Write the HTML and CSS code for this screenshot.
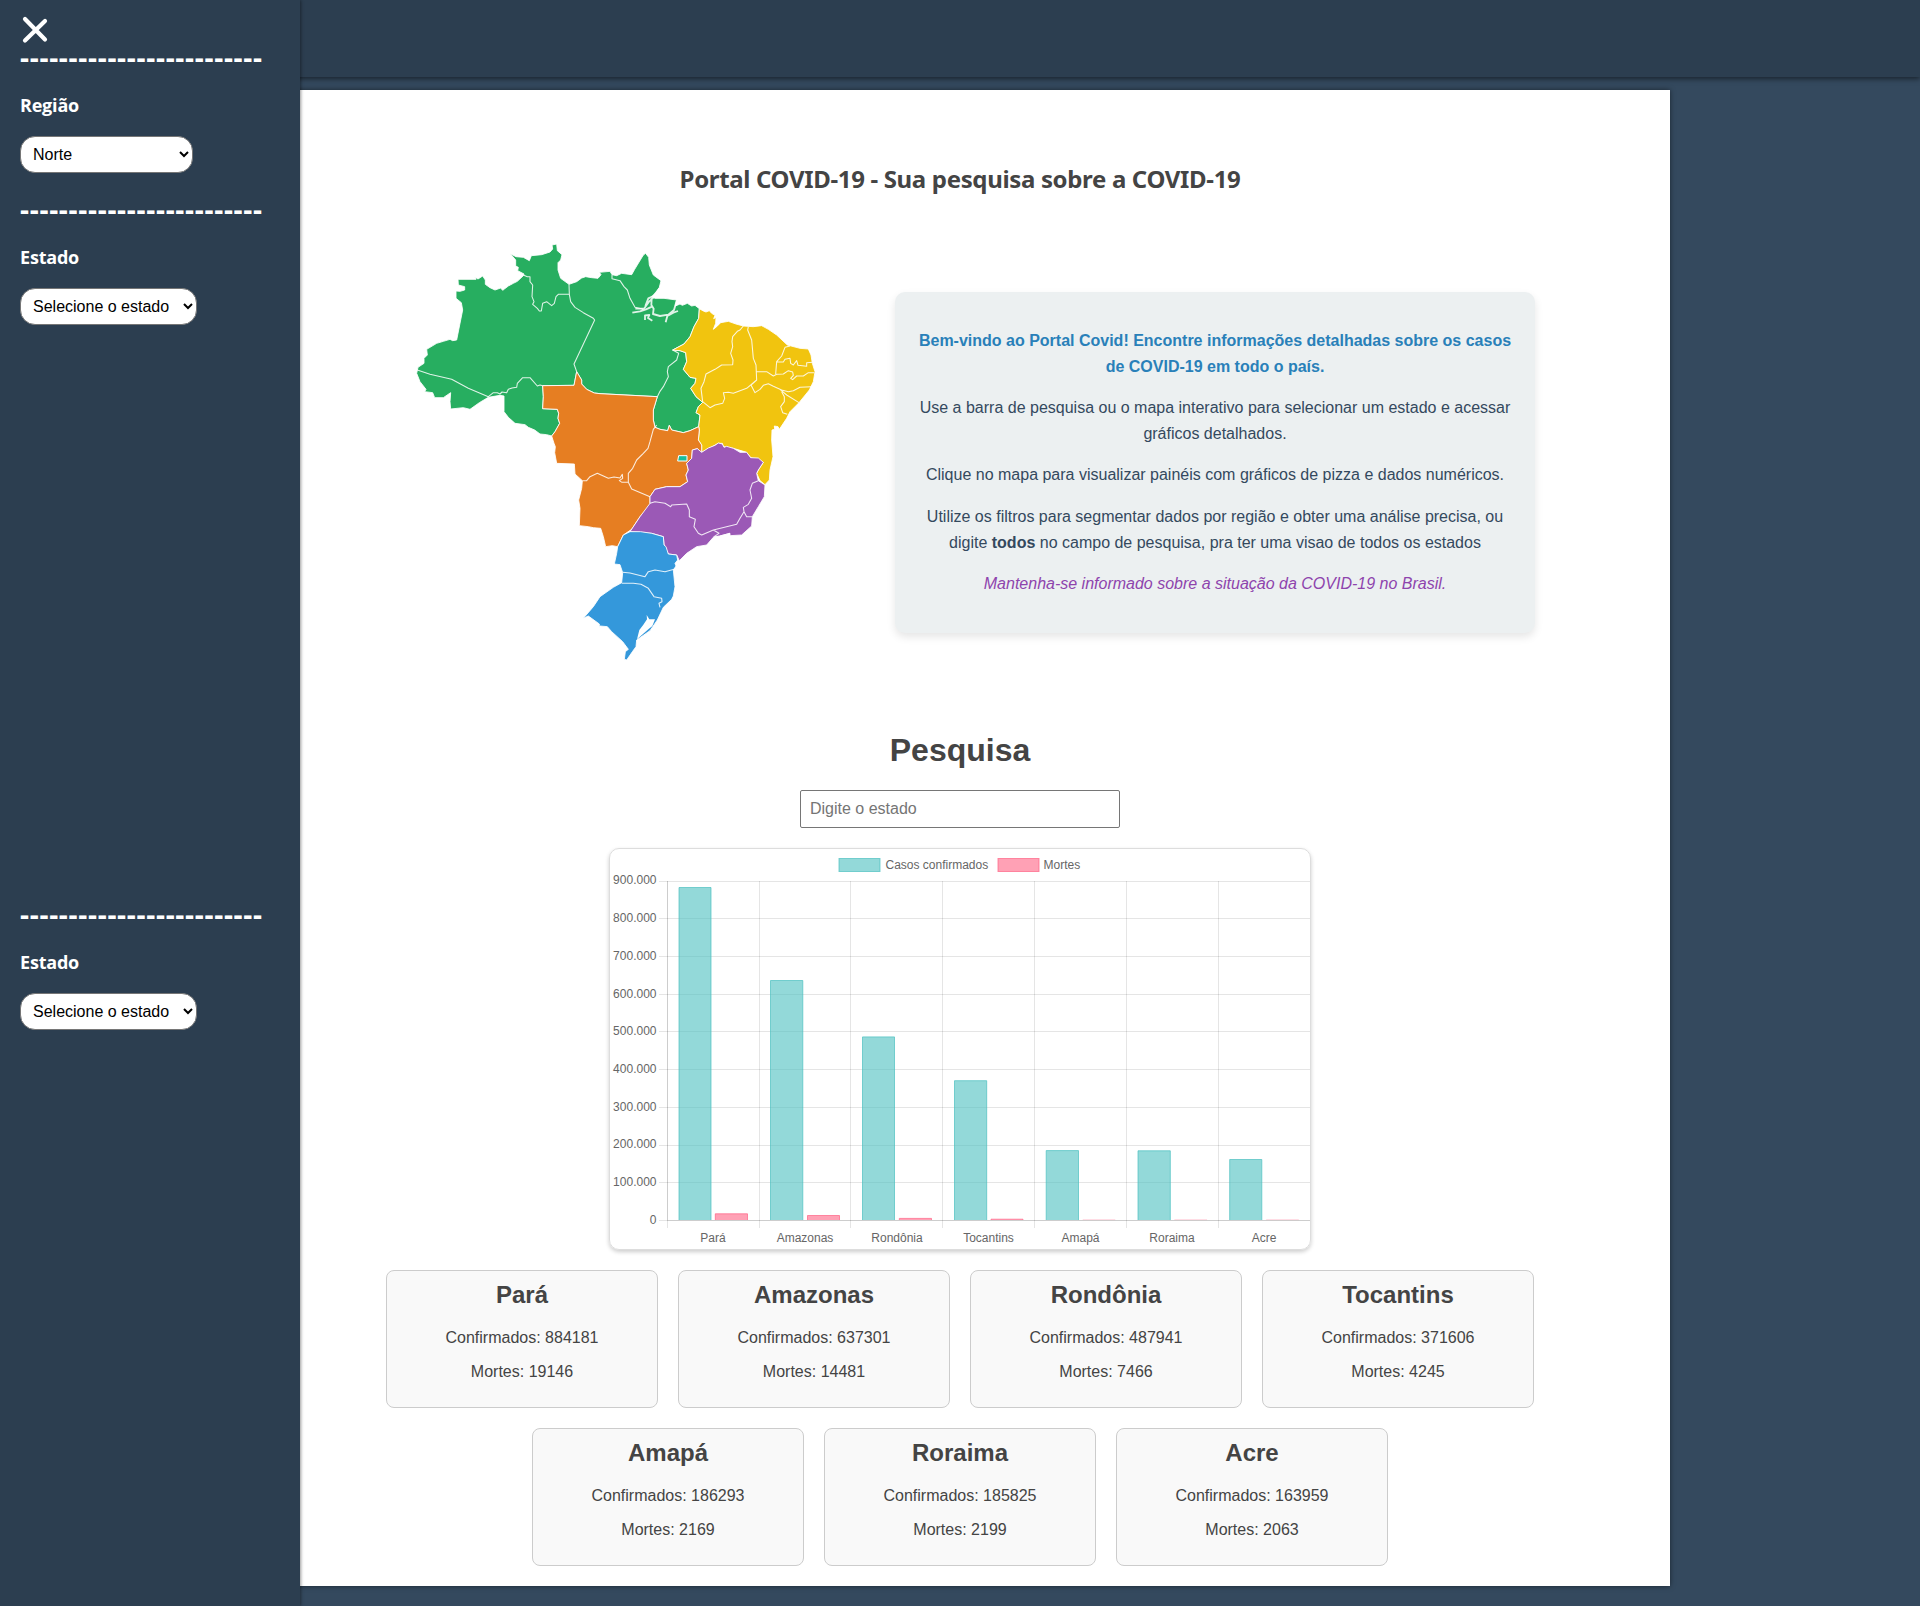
FILE: index.html
```html
<!DOCTYPE html>
<html lang="pt-BR">
<head>
<meta charset="utf-8">
<title>Portal COVID-19</title>
<link rel="stylesheet" href="styles.css">
</head>
<body>
<header class="topbar"></header>
<aside class="sidebar">
  <button class="close" aria-label="Fechar"><svg width="26" height="28" viewBox="0 0 26 28"><path d="M3 3L23 23.5M3 24.5L23 5" stroke="#fff" stroke-width="4.2" stroke-linecap="round"/></svg></button>
  <section class="filter">
    <div class="dashes">-------------------------</div>
    <h3>Região</h3>
    <select class="region"><option>Norte</option></select>
  </section>
  <section class="filter">
    <div class="dashes">-------------------------</div>
    <h3>Estado</h3>
    <select class="state"><option>Selecione o estado</option></select>
  </section>
  <section class="filter filter-last">
    <div class="dashes">-------------------------</div>
    <h3>Estado</h3>
    <select class="state"><option>Selecione o estado</option></select>
  </section>
</aside>
<main class="page">
  <h1>Portal COVID-19 - Sua pesquisa sobre a COVID-19</h1>
  <div class="intro">
    <svg class="map" viewBox="0 0 1260 1320" width="420" height="440">
      <g class="norte">
        <path class="land" d="M50 430L54 412L72 400L72 385L82 375L80 358L110 340L130 334L150 328L158 332L170 330L179 285L188 240L184 218L168 205L168 183L180 184L194 180L194 170L175 165L174 148L228 148L224 141L234 147L248 138L256 150L256 163L270 173L285 180L302 174L308 181L325 168L340 160L352 154L370 137L372 132L353 122L355 112L347 108L347 90L331 71L348 80L370 82L388 92L394 77L425 74L450 66L458 57L456 45L470 42L472 62L486 74L482 90L474 98L474 120L482 145L507 163L530 155L545 144L557 140L575 143L594 145L603 134L598 127L630 124L636 134L650 137L665 130L695 134L704 118L730 75L737 70L746 82L748 105L760 135L783 152L778 172L768 188L755 200L765 205L792 205L830 210L826 228L840 222L847 226L862 220L875 228L885 226L898 236L896 265L882 290L870 320L852 342L818 360L840 362L857 368L860 395L850 418L870 442L888 445L885 460L872 475L888 500L908 517L895 530L888 548L900 555L896 590L870 602L850 608L815 600L808 586L803 602L780 598L765 592L760 570L760 540L772 500L600 491L583 489L560 478L545 462L545 450L530 425L522 466L428 467L430 500L428 536L472 538L476 550L474 565L479 580L465 605L455 618L440 614L420 612L404 600L385 592L375 584L345 580L325 562L312 545L312 498L300 496L265 502L238 518L210 538L190 533L152 537L150 515L152 488L130 503L104 503L98 488L74 485L78 478L60 455Z"/>
        <path class="border" d="M52 420L90 433L155 448L205 475L265 500L280 488L292 488L300 492L306 486L320 488L325 478L336 474L350 472L352 460L368 443L390 443L412 468L420 465L428 467M370 135L382 140L390 140L390 155L398 165L396 200L402 215L398 223L412 235L418 243L424 243L428 220L440 215L455 227L463 220L468 200L475 193L508 193M507 163L508 193L512 215L525 232L550 248L580 265L584 270L522 402L530 425M636 134L636 146L660 152L672 170L682 180L690 205L705 232L730 238M818 360L836 370L830 390L805 410L802 425L805 440L790 470L780 484L772 500"/>
        <path class="river" d="M697 248L720 244L738 238L756 230M706 236L732 236L748 214L780 184M736 228L745 205L760 198L778 176M760 198L792 196M770 190L788 192M755 205L754 225L761 236L759 252L780 258L805 254L822 240L830 212M735 270L735 256L748 255L744 264L757 272M797 277L802 258L820 248L834 243"/>
      </g>
      <g class="nordeste">
        <path class="land" d="M898 236L910 243L918 246L928 242L935 250L945 256L941 266L948 262L947 280L940 298L950 290L962 278L985 274L1008 282L1030 288L1060 290L1085 287L1105 298L1130 315L1162 345L1200 355L1225 357L1233 375L1237 400L1245 425L1240 455L1228 480L1197 518L1170 545L1160 565L1138 598L1134 590L1123 588L1124 598L1116 600L1115 630L1119 680L1110 720L1108 750L1095 764L1080 752L1070 730L1075 720L1090 697L1060 686L1052 683L1040 667L1000 655L970 650L967 640L955 640L905 667L905 645L895 630L898 600L896 590L900 555L888 548L895 530L908 517L888 500L872 475L885 460L888 445L870 442L850 418L860 395L857 368L840 362L818 360L852 342L870 320L882 290L896 265Z"/>
        <path class="border" d="M1030 288L1020 300L1012 304L998 320L996 335L998 350L992 370L999 390L998 404L965 405L945 418L918 432L912 455L903 475L908 515L930 533L945 525L968 520L974 505L970 488L985 487L1000 490L1040 475L1070 450L1068 405L1060 385L1055 330L1043 300L1045 290M1070 425L1100 425L1120 438L1130 433M1170 348L1155 352L1145 378L1130 395L1127 432M1130 395L1150 396L1155 388L1170 385L1172 400L1180 405L1190 392L1194 406L1220 409L1220 398L1238 397M1130 433L1150 432L1165 422L1178 426L1180 436L1172 445L1178 449L1190 438L1210 438L1225 428L1242 428M1053 465L1065 488L1080 478L1090 466L1105 461L1120 469L1145 480L1165 485L1180 482L1200 472L1235 470M1140 478L1160 495L1197 518M1145 485L1153 500L1153 515L1142 530L1148 548L1162 553M1070 450L1053 465"/>
      </g>
      <g class="centro">
        <path class="land" d="M530 425L545 450L545 462L560 478L583 489L600 491L772 500L760 540L760 570L765 592L780 598L803 602L808 586L815 600L850 608L870 602L896 590L898 600L895 630L905 645L905 667L892 656L877 660L875 685L860 700L865 720L858 735L863 755L840 770L800 770L765 778L750 800L750 828L720 860L695 898L670 915L653 950L637 947L617 950L610 920L602 895L580 893L565 890L538 887L540 835L536 810L545 775L547 752L525 732L523 702L470 700L464 668L466 650L462 640L455 618L465 605L479 580L474 565L476 550L472 538L428 536L430 500L428 467L522 466Z"/>
        <path class="border" d="M770 585L760 598L750 635L744 655L730 670L710 690L698 715L685 730L685 757M547 752L560 752L570 740L592 730L625 745L642 741L660 744L667 733L668 745L658 752L666 757L685 757L695 777L750 800"/>
        <path class="federal" d="M836 677H861V693H833Z"/>
      </g>
      <g class="sudeste">
        <path class="land" d="M690 905L720 860L750 820L750 800L765 778L800 770L840 770L863 755L858 735L865 720L860 700L875 685L877 660L892 656L905 667L925 654L945 646L955 639L967 642L972 652L980 649L1000 655L1020 667L1040 667L1052 683L1075 684L1090 697L1075 720L1070 730L1075 752L1095 765L1093 800L1075 830L1057 860L1055 888L1025 915L990 917L990 910L960 918L940 922L920 945L890 950L860 970L838 992L830 975L805 972L792 945L790 920L755 910Z"/>
        <path class="border" d="M750 820L765 815L795 820L812 830L815 825L860 822L868 840L868 860L886 868L882 890L895 910L905 915L940 900L1010 883L1020 865L1032 845L1030 832L1045 823L1055 805L1050 780L1057 760L1075 752M1032 845L1040 860L1057 860M940 900L957 910L942 920L960 918M960 918L990 910"/>
      </g>
      <g class="sul">
        <path class="land" d="M670 915L690 905L722 905L755 910L790 920L792 945L798 950L805 972L830 975L833 990L825 1000L828 1008L820 1020L823 1050L825 1070L820 1098L815 1108L790 1132L772 1170L750 1202L710 1230L708 1250L698 1264L680 1290L673 1288L676 1265L685 1258L668 1235L635 1205L622 1190L600 1188L598 1193L598 1182L565 1158L550 1165L580 1130L600 1100L640 1072L665 1058L668 1028L660 1004L643 1002L650 970L653 950Z"/>
        <path class="border" d="M668 1027L690 1029L735 1040L745 1025L765 1020L795 1025L825 1017M665 1060L700 1060L723 1063L745 1075L762 1100L785 1105L786 1115L777 1120L780 1132"/>
        <path class="lagoon" d="M740 1155L741 1168L730 1184L718 1200L711 1228L745 1198L757 1188L765 1168L748 1168Z"/>
      </g>
    </svg>
    <div class="welcome">
      <p class="lead">Bem-vindo ao Portal Covid! Encontre informações detalhadas sobre os casos de COVID-19 em todo o país.</p>
      <p>Use a barra de pesquisa ou o mapa interativo para selecionar um estado e acessar gráficos detalhados.</p>
      <p>Clique no mapa para visualizar painéis com gráficos de pizza e dados numéricos.</p>
      <p>Utilize os filtros para segmentar dados por região e obter uma análise precisa, ou digite <strong>todos</strong> no campo de pesquisa, pra ter uma visao de todos os estados</p>
      <p class="closing">Mantenha-se informado sobre a situação da COVID-19 no Brasil.</p>
    </div>
  </div>
  <h2 class="search-title">Pesquisa</h2>
  <input class="search" type="text" placeholder="Digite o estado">
  <div class="chart">
    <svg width="700" height="400" viewBox="0 0 700 400">
      <path class="grid" d="M49 32.5H700M49 69.5H700M49 107.5H700M49 145.5H700M49 182.5H700M49 220.5H700M49 258.5H700M49 296.5H700M49 333.5H700M49 371.5H700M57.5 32V379M149.5 32V379M240.5 32V379M332.5 32V379M424.5 32V379M516.5 32V379M608.5 32V379"/>
      <path class="grid" d="M57.5 32V371M57 371.5H700"/>
      <g class="cases">
        <rect x="229" y="9.5" width="41" height="13"/>
        <path d="M69 371V38.5H101V371M160.5 371V131.5H192.8V371M252.5 371V187.9H284.5V371M344.5 371V231.7H376.7V371M436.2 371V301.6H468.5V371M528 371V301.8H560.3V371M619.7 371V310.5H651.8V371"/>
      </g>
      <g class="deaths">
        <rect x="388" y="9.5" width="41" height="13"/>
        <path d="M105.3 371V364.8H137.5V371M197.5 371V366.5H229.5V371M289.3 371V369.4H321.5V371M381 371V370.2H413V371"/>
        <path class="faint" d="M472.8 371V370.8H505.2V371M564.5 371V370.8H597V371M656.3 371V370.8H688.7V371"/>
      </g>
      <g class="labels">
        <text x="275.5" y="20">Casos confirmados</text><text x="433.5" y="20">Mortes</text>
      </g>
      <g class="labels yaxis">
        <text x="46.5" y="35">900.000</text><text x="46.5" y="73">800.000</text><text x="46.5" y="111">700.000</text><text x="46.5" y="149">600.000</text><text x="46.5" y="186">500.000</text><text x="46.5" y="224">400.000</text><text x="46.5" y="262">300.000</text><text x="46.5" y="299">200.000</text><text x="46.5" y="337">100.000</text><text x="46.5" y="375">0</text>
      </g>
      <g class="labels xaxis">
        <text x="103" y="393">Pará</text><text x="195" y="393">Amazonas</text><text x="287" y="393">Rondônia</text><text x="378.5" y="393">Tocantins</text><text x="470.5" y="393">Amapá</text><text x="562" y="393">Roraima</text><text x="654" y="393">Acre</text>
      </g>
    </svg>
  </div>
  <div class="cards">
    <article class="card"><h2>Pará</h2><p>Confirmados: 884181</p><p>Mortes: 19146</p></article>
    <article class="card"><h2>Amazonas</h2><p>Confirmados: 637301</p><p>Mortes: 14481</p></article>
    <article class="card"><h2>Rondônia</h2><p>Confirmados: 487941</p><p>Mortes: 7466</p></article>
    <article class="card"><h2>Tocantins</h2><p>Confirmados: 371606</p><p>Mortes: 4245</p></article>
    <article class="card"><h2>Amapá</h2><p>Confirmados: 186293</p><p>Mortes: 2169</p></article>
    <article class="card"><h2>Roraima</h2><p>Confirmados: 185825</p><p>Mortes: 2199</p></article>
    <article class="card"><h2>Acre</h2><p>Confirmados: 163959</p><p>Mortes: 2063</p></article>
  </div>
</main>
</body>
</html>
```
FILE: styles.css
```css
* { box-sizing: border-box; }
body {
  margin: 0;
  min-height: 1606px;
  background: #34495e;
  color: #444;
  font: 16px "Liberation Sans", Arial, sans-serif;
}
.topbar {
  height: 77px;
  background: #2c3e50;
  box-shadow: 0 2px 5px rgba(0, 0, 0, .5);
}
.sidebar {
  position: absolute;
  top: 0;
  left: 0;
  z-index: 2;
  width: 300px;
  height: 1606px;
  padding: 16px 20px 0;
  background: #2c3e50;
  box-shadow: 1px 0 3px rgba(0, 0, 0, .4);
  color: #fff;
}
.close {
  display: block;
  height: 26px;
  margin: 0 0 0 2px;
  padding: 0;
  border: 0;
  background: none;
}
.close svg { display: block; }
.filter { height: 152px; }
.filter-last { margin-top: 553px; }
.dashes {
  height: 51px;
  font: bold 28px/30px "Open Sans", sans-serif;
  letter-spacing: .7px;
  white-space: nowrap;
}
.filter h3 {
  height: 43px;
  margin: 0;
  font: bold 18px/24px "Open Sans", "Noto Sans", sans-serif;
  letter-spacing: -.2px;
}
.filter select {
  display: block;
  height: 37px;
  padding: 8px;
  border: 1px solid #767676;
  border-radius: 15px;
  background: #fff;
  color: #000;
  font: 16px "Liberation Sans", Arial, sans-serif;
}
.filter .region { width: 173px; }
.filter .state { width: 177px; }
.page {
  display: flex;
  flex-direction: column;
  align-items: center;
  width: 1420px;
  height: 1496px;
  margin: 13px auto 0;
  background: #fff;
  box-shadow: 0 0 5px rgba(0, 0, 0, .5);
}
h1 {
  height: 32px;
  margin: 73px 0 35px;
  font: bold 24px/32px "Noto Sans", "Open Sans", sans-serif;
  letter-spacing: -.34px;
  white-space: nowrap;
}
.intro {
  display: grid;
  grid-template-columns: 1fr 640px;
  align-items: start;
  width: 1150px;
}
.map { margin-left: 15px; }
.land, .border, .river { stroke: #fff; stroke-width: 2.6; stroke-linejoin: round; }
.border, .river { fill: none; stroke-opacity: .85; }
.border { stroke-width: 3.2; }
.river { stroke-width: 5.5; }
.norte { fill: #27ae60; }
.nordeste { fill: #f1c40f; }
.centro { fill: #e67e22; }
.sudeste { fill: #9b59b6; }
.sul { fill: #3498db; }
.federal { fill: #1abc9c; stroke: #fff; stroke-width: 3; }
.lagoon { fill: #fff; }
.welcome {
  margin-top: 62px;
  padding: 20px;
  border-radius: 10px;
  background: #ecf0f1;
  box-shadow: 0 4px 8px rgba(0, 0, 0, .1);
  color: #34495e;
  line-height: 1.6;
  text-align: center;
}
.welcome p { margin: 16px 0; }
.welcome .lead { color: #2980b9; font-weight: bold; }
.welcome .closing { color: #8e44ad; font-style: italic; }
.search-title {
  margin: 62px 0 22px;
  font-size: 32px;
  line-height: 36px;
}
.search {
  width: 320px;
  height: 38px;
  margin-bottom: 20px;
  padding: 0 9px;
  border: 1px solid #767676;
  border-radius: 2px;
  font: 16px "Liberation Sans", Arial, sans-serif;
}
.search::placeholder { color: #757575; }
.chart {
  width: 702px;
  height: 402px;
  border: 1px solid #ddd;
  border-radius: 10px;
  box-shadow: 0 2px 4px rgba(0, 0, 0, .2);
}
.chart svg { display: block; }
.grid { fill: none; stroke: rgba(0, 0, 0, .1); }
.cases { fill: rgba(75, 192, 192, .6); stroke: #4bc0c0; stroke-opacity: .7; }
.deaths { fill: rgba(255, 99, 132, .6); stroke: #ff6384; stroke-opacity: .7; }
.faint { stroke-opacity: .1; }
.labels { fill: #666; font-size: 12px; }
.yaxis { text-anchor: end; }
.xaxis { text-anchor: middle; }
.cards {
  display: flex;
  flex-wrap: wrap;
  justify-content: center;
  gap: 20px;
  width: 1150px;
  margin-top: 20px;
}
.card {
  width: 272px;
  height: 138px;
  padding: 10px 20px;
  border: 1px solid #ccc;
  border-radius: 8px;
  background: #f9f9f9;
  text-align: center;
}
.card h2 { margin: 0 0 21px; font-size: 24px; line-height: 27px; }
.card p { margin: 0 0 16px; line-height: 18px; }
```
